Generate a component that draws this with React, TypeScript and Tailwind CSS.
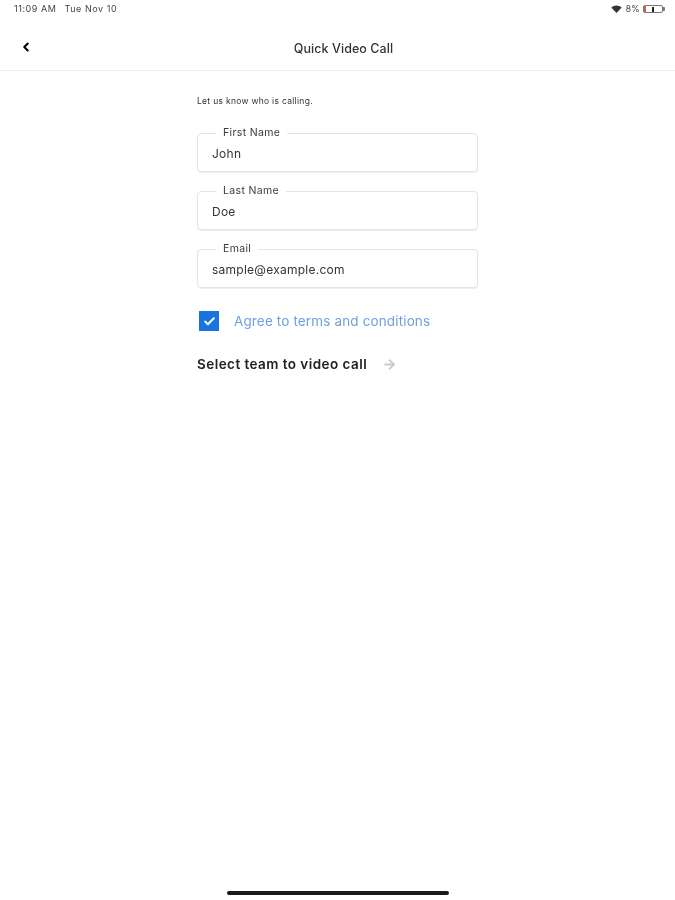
import { ArrowRight, Check, ChevronLeft } from "lucide-react";

function Field({ label, value }: { label: string; value: string }) {
  return (
    <div className="relative h-[39px] rounded-[4px] border-[1.5px] border-[#e3e3e3] shadow-[0_1px_1px_rgba(0,0,0,0.07)] flex items-center pl-[14px] pt-[2px]">
      {/* Label sits on top of the border */}
      <span className="absolute left-[18px] top-[-8px] bg-white px-[7px] text-[10.5px] leading-[14px] tracking-[0.35px] text-[#3a3a3a]">
        {label}
      </span>
      <span className="text-[12px] tracking-[0.25px] text-[#333]">{value}</span>
    </div>
  );
}

export default function App() {
  return (
    <div className="relative h-[900px] w-[675px] overflow-hidden bg-white font-['Inter',sans-serif] blur-[0.4px]">
      {/* Status bar */}
      <div className="flex h-[18px] items-center justify-between pl-[14px] pr-[12px] text-[9px] tracking-[0.55px] text-[#444]">
        <div className="flex gap-[8px]">
          <span>11:09 AM</span>
          <span>Tue Nov 10</span>
        </div>
        <div className="flex items-center gap-[3px]">
          <svg width="13" height="8" viewBox="0 0 11 8">
            <path d="M0.3 2.6 A7.5 7.5 0 0 1 10.7 2.6 L5.5 8 Z" fill="#333" />
          </svg>
          <span className="text-[8.5px] tracking-[0.3px]">8%</span>
          <div className="relative flex h-[8px] w-[20px] items-center justify-center rounded-[2px] border border-[#777]">
            <div className="absolute left-0 top-0 h-full w-[2px] bg-[#e05a4a]" />
            <div className="h-[5px] w-[2px] bg-[#222]" />
            <div className="absolute right-[-3px] top-[1px] h-[4px] w-[2px] rounded-r-[1px] bg-[#777]" />
          </div>
        </div>
      </div>

      {/* Header */}
      <div className="relative flex h-[53px] items-center justify-center border-b border-[#efefef] pl-[12px] pt-[11px]">
        <ChevronLeft className="absolute left-[19px] top-[22px] h-[14px] w-[14px] text-black" strokeWidth={3.5} />
        <span className="text-[12.5px] font-medium tracking-[0.06px] text-[#333]">Quick Video Call</span>
      </div>

      {/* Form */}
      <div className="mx-auto mt-[24px] flex w-[281px] flex-col">
        <p className="text-[8.5px] leading-[12px] tracking-[0.3px] text-[#333]">Let us know who is calling.</p>
        <div className="mt-[26px] flex flex-col gap-[19px]">
          <Field label="First Name" value="John" />
          <Field label="Last Name" value="Doe" />
          <Field label="Email" value="sample@example.com" />
        </div>

        <div className="mt-[23px] flex items-center pl-[2px]">
          <div className="flex h-[20px] w-[20px] items-center justify-center bg-[#1a73e0]">
            <Check className="h-[13px] w-[13px] text-white" strokeWidth={3.5} />
          </div>
          <span className="ml-[15px] text-[13.5px] tracking-[0.14px] text-[#6f9fe3]">Agree to terms and conditions</span>
        </div>

        <div className="mt-[23px] flex items-center">
          <span className="text-[13.5px] font-semibold tracking-[0.45px] text-[#222]">Select team to video call</span>
          <ArrowRight className="ml-[15px] h-[15px] w-[15px] text-[#c9c9c9]" strokeWidth={3} />
        </div>
      </div>

      {/* Home indicator */}
      <div className="absolute bottom-[5px] left-[227px] h-[4px] w-[222px] rounded-full bg-[#1a1a1a]" />
    </div>
  );
}
